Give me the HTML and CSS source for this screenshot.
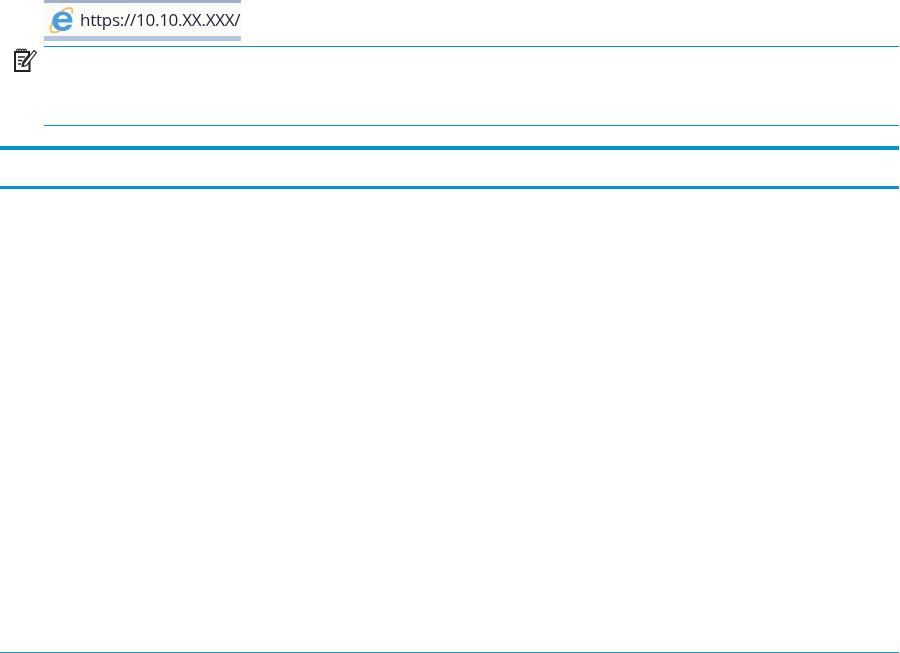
FILE: index.html
```html
<!DOCTYPE html>
<html lang="en">
<head>
<meta charset="utf-8">
<title>Note</title>
<link rel="stylesheet" href="styles.css">
</head>
<body>
<div class="page">
  <div class="addressbar">
    <svg class="ie-icon" viewBox="0 0 24 26" aria-hidden="true">
      <path d="M2.800 25C.3 23.500 1.500 17.500 6 11 11 4.500 18.500-.5 22 1.300c1.500.8 1.700 2.700 1 4.700" fill="none" stroke="#e6c455" stroke-width="1.800" stroke-linecap="round"/>
      <path d="M2.800 25c2 1 5 .2 7.700-1.300" fill="none" stroke="#e6c455" stroke-width="1.800" stroke-linecap="round"/>
      <path d="M21.500 15.500H9c.3 3 2.300 4.500 4.800 4.500 2 0 3.500-.8 4.600-2.300h4.800c-1.700 4-5 6.300-9.500 6.300-6.200 0-10.400-4-10.400-9.700C3.300 8.800 7.800 4.500 13.700 4.500c6.300 0 9.800 4.200 9.800 10.200v.8zM9.100 12h9.600c-.3-2.500-2.200-4-4.700-4s-4.400 1.500-4.900 4z" fill="#4a9edd"/>
    </svg>
    <span class="url">https://10.10.XX.XXX/</span>
  </div>
  <div class="note">
    <svg class="note-icon" viewBox="0 0 23 24" aria-hidden="true">
      <path d="M2.500 4c0-4 2.500-4 2.500 0 0-4 2.500-4 2.500 0 0-4 2.500-4 2.500 0 0-4 2.500-4 2.500 0" stroke="#222" stroke-width="1.100" fill="none"/>
      <path d="M1 4h14v3L9.500 14 8.500 17.500 12 16.500l3.500-4V23H1z" fill="none" stroke="#222" stroke-width="2"/>
      <path d="M4 9h7M4 12.500h4M4 16h3" stroke="#222" stroke-width="1.300" fill="none"/>
      <path d="M9.800 15.500 20 2.500l2.500 2-10 13-3.200 1z" fill="#fff" stroke="#222" stroke-width="1.200"/>
    </svg>
    <div class="note-body"></div>
  </div>
  <div class="band"></div>
  <div class="footer-rule"></div>
</div>
</body>
</html>
```

FILE: styles.css
```css
html, body {
  margin: 0;
  padding: 0;
  background: #fff;
}

.page {
  width: 899px;
  height: 653px;
  display: flex;
  flex-direction: column;
}

.addressbar {
  width: 197px;
  height: 41px;
  margin-left: 44px;
  box-sizing: border-box;
  border-top: 3px solid #9fb0c8;
  border-bottom: 5px solid #b4c6de;
  background: #fbfbf8;
  display: flex;
  align-items: center;
  gap: 7px;
  padding-left: 5px;
  overflow: hidden;
  filter: blur(0.3px);
}

.ie-icon {
  width: 24px;
  height: 26px;
  flex: none;
}

.url {
  font-family: "Open Sans", "Liberation Sans", sans-serif;
  font-size: 17px;
  letter-spacing: -0.250px;
  color: #1f1f35;
  white-space: nowrap;
}

.note {
  margin-top: 5px;
  display: flex;
  align-items: flex-start;
  gap: 7px;
  padding-left: 14px;
}

.note-icon {
  width: 23px;
  height: 24px;
  flex: none;
  margin-top: 2px;
}

.note-body {
  flex: 1;
  height: 78px;
  border-top: 1px solid #0096d6;
  border-bottom: 1px solid #0096d6;
}

.band {
  margin-top: 20px;
  height: 36px;
  flex: none;
  border-top: 4px solid #0096d6;
  border-bottom: 3px solid #0096d6;
}

.footer-rule {
  margin-top: auto;
  height: 1px;
  background: #1a9ac4;
}
```
